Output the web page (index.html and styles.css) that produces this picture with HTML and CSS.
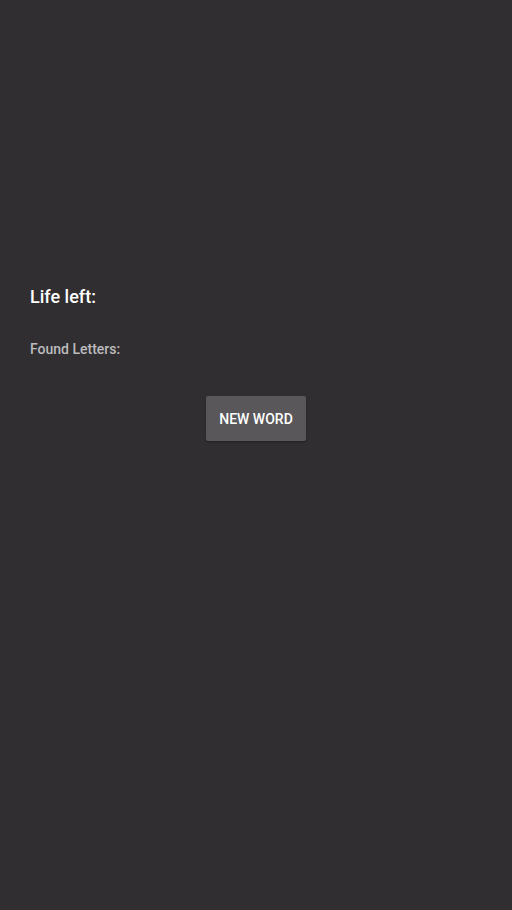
FILE: index.html
```html
<!DOCTYPE html>
<html>
<head>
<meta charset="utf-8">
<link rel="stylesheet" href="styles.css">
</head>
<body>
<main class="screen">
  <section class="game">
    <h2 class="life">Life left:</h2>
    <p class="found">Found Letters:</p>
    <div class="actions">
      <button class="btn">NEW WORD</button>
    </div>
  </section>
</main>
</body>
</html>
```
FILE: styles.css
```css
html, body {
  margin: 0;
  padding: 0;
  background: #302e31;
}
.screen {
  width: 512px;
  height: 910px;
  box-sizing: border-box;
  padding: 285px 30px 0 30px;
  font-family: Roboto, "Noto Sans", sans-serif;
}
.game {
  display: flex;
  flex-direction: column;
}
.life {
  margin: 0;
  font-size: 18px;
  line-height: 24px;
  font-weight: 500;
  color: #ffffff;
}
.found {
  margin: 30px 0 0 0;
  font-size: 14px;
  line-height: 20px;
  font-weight: 500;
  color: #bcbbbd;
}
.actions {
  display: flex;
  justify-content: center;
  margin-top: 37px;
}
.btn {
  width: 100px;
  height: 45px;
  border: none;
  border-radius: 2px;
  background: #59575a;
  color: #ffffff;
  font-family: Roboto, "Noto Sans", sans-serif;
  font-size: 14px;
  font-weight: 500;
  padding: 0;
  box-shadow: 0 1px 2px rgba(0,0,0,0.35);
}
```
